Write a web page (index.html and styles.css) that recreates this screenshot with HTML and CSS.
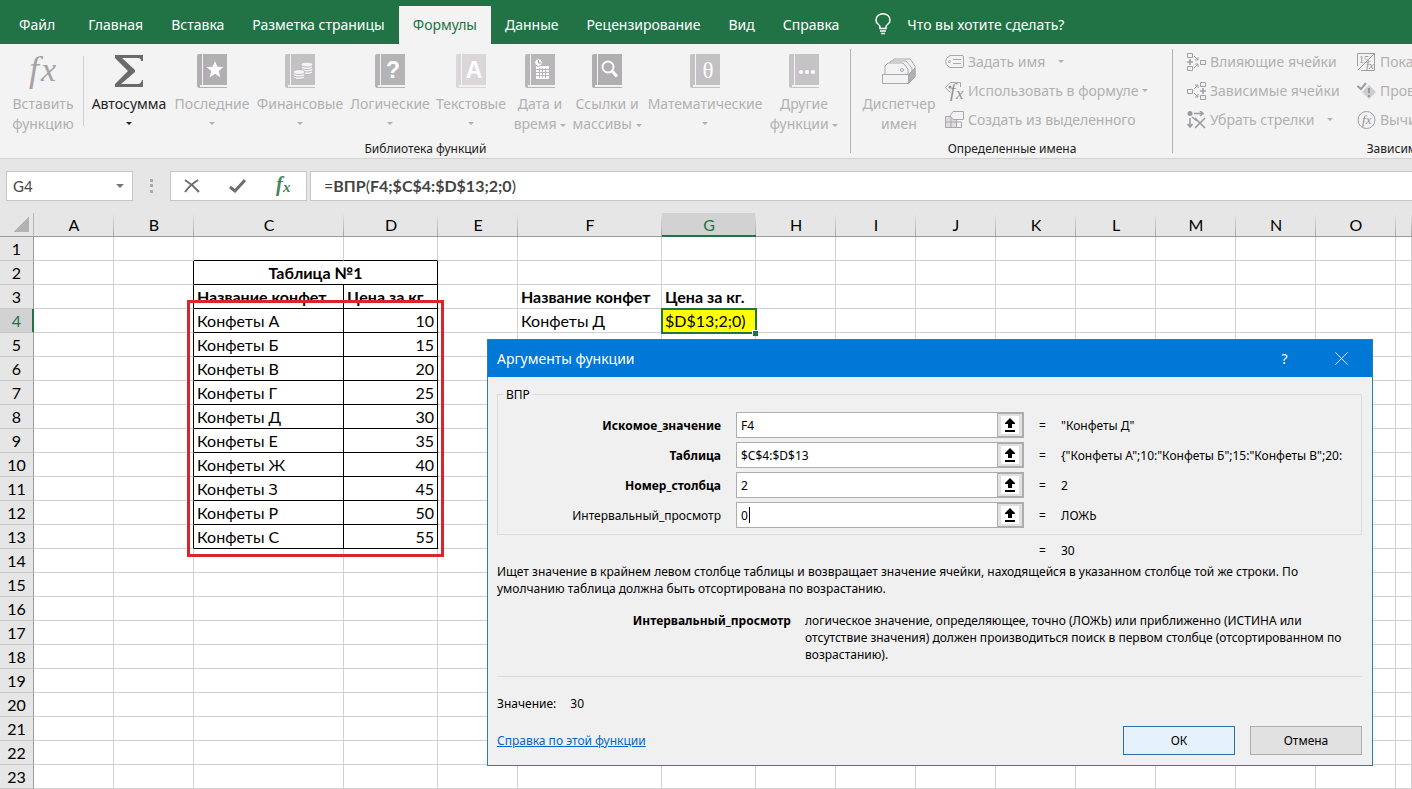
FILE: index.html
```html
<!DOCTYPE html>
<html lang="ru">
<head>
<meta charset="UTF-8">
<meta name="viewport" content="width=device-width, initial-scale=1.0">
<title>Excel - Формулы</title>
<link rel="stylesheet" href="styles.css">
</head>
<body>

<svg class="defs" width="0" height="0">
    <symbol id="book" viewBox="0 0 30 34">
        <path fill="currentColor" d="M2 0h3v31H3v2h27v1H2.500Q0 34 0 31.500V2Q0 0 2 0zM6 0h24v31H6z"/>
    </symbol>
</svg>

<nav class="tabs">
    <button class="tab file">Файл</button>
    <button class="tab">Главная</button>
    <button class="tab">Вставка</button>
    <button class="tab">Разметка страницы</button>
    <button class="tab active">Формулы</button>
    <button class="tab">Данные</button>
    <button class="tab">Рецензирование</button>
    <button class="tab">Вид</button>
    <button class="tab">Справка</button>
    <button class="tell-me">
        <svg width="16" height="22" viewBox="0 0 16 22" fill="none" stroke="#fff" stroke-width="1.500"><path d="M5 15.500V14Q5 12.500 3 11Q1 9.500 1 7a7 6.300 0 0 1 14 0Q15 9.500 13 11Q11 12.500 11 14v1.500zM5 18h6M6 20.500h4"/></svg>
        Что вы хотите сделать?
    </button>
</nav>

<div class="ribbon">
    <section class="group library">
        <div class="big-buttons">
            <button class="big insert">
                <svg class="icon fx" width="30" height="34" fill="#a3a3a3"><text x="1" y="27" font-size="36">f</text><text x="13" y="27" font-size="34">x</text></svg>
                <span>Вставить</span><span>функцию</span>
            </button>
            <button class="big enabled">
                <svg class="icon" width="30" height="34" viewBox="0 0 30 34"><path fill="#6a6a6a" d="M1 1h28v6h-2q0-3-3-3H8l13 12v2L7 30h17q3 0 4-4h1v7H1v-3l13-13L1 4z"/></svg>
                <span>Автосумма</span><i class="arrow below"></i>
            </button>
            <button class="big">
                <svg class="icon" style="color:#b1afb1" width="30" height="34"><use href="#book"/><path fill="#fff" d="M18 7l2.300 5.800 6.200.300-4.800 4 1.600 6.100-5.300-3.500-5.300 3.500 1.600-6.100-4.800-4 6.200-.300z"/></svg>
                <span>Последние</span><i class="arrow below"></i>
            </button>
            <button class="big">
                <svg class="icon" style="color:#c3c1c3" width="30" height="34"><use href="#book"/><g fill="#f5f3f5" stroke="#bbb9bb" stroke-width="1"><ellipse cx="22" cy="18" rx="6" ry="2.500"/><ellipse cx="22" cy="15.500" rx="6" ry="2.500"/><ellipse cx="22" cy="13" rx="6" ry="2.500"/><ellipse cx="22" cy="10.500" rx="6" ry="2.500"/><ellipse cx="14" cy="23" rx="6" ry="2.500"/><ellipse cx="14" cy="20.500" rx="6" ry="2.500"/><ellipse cx="14" cy="18" rx="6" ry="2.500"/></g></svg>
                <span>Финансовые</span><i class="arrow below"></i>
            </button>
            <button class="big">
                <svg class="icon sign" style="color:#b5b3b5" width="30" height="34"><use href="#book"/><text x="18" y="24">?</text></svg>
                <span>Логические</span><i class="arrow below"></i>
            </button>
            <button class="big">
                <svg class="icon sign" style="color:#dad6da" width="30" height="34"><use href="#book"/><text x="18" y="24">A</text></svg>
                <span>Текстовые</span><i class="arrow below"></i>
            </button>
            <button class="big">
                <svg class="icon" style="color:#b8b6b8" width="30" height="34"><use href="#book"/><path fill="#fff" d="M11 12h13v13H11z"/><path stroke="#b8b6b8" d="M11 15.500h13M11 18.500h13M11 21.500h13M14.500 14v10M17.500 14v10M20.500 14v10"/><circle cx="13.500" cy="8.500" r="3.800" fill="#fff" stroke="#b8b6b8"/><path fill="none" stroke="#999" d="M13.500 6v3H16"/></svg>
                <span>Дата и</span><span>время <i class="arrow"></i></span>
            </button>
            <button class="big">
                <svg class="icon" style="color:#b0aeb0" width="30" height="34"><use href="#book"/><g fill="none" stroke="#fff"><circle cx="16" cy="13" r="5.500" stroke-width="1.800"/><path stroke-width="3" d="M20 17l5 5.500"/></g></svg>
                <span>Ссылки и</span><span>массивы <i class="arrow"></i></span>
            </button>
            <button class="big">
                <svg class="icon sign theta" style="color:#c3c1c4" width="30" height="34"><use href="#book"/><text x="18" y="24">θ</text></svg>
                <span>Математические</span><i class="arrow below"></i>
            </button>
            <button class="big">
                <svg class="icon" style="color:#c5c3c6" width="30" height="34"><use href="#book"/><g fill="#fff"><circle cx="12" cy="18" r="2"/><circle cx="18" cy="18" r="2"/><circle cx="24" cy="18" r="2"/></g></svg>
                <span>Другие</span><span>функции <i class="arrow"></i></span>
            </button>
        </div>
        <h2>Библиотека функций</h2>
    </section>

    <section class="group names">
        <div class="row">
            <button class="big">
                <svg class="icon" width="36" height="34" viewBox="0 0 36 34" fill="#f3f3f3" stroke="#aaa7ad"><path d="M11 8l2-3h16l5 7v10H12z"/><path d="M8 10l2-3h15l6 7v10H9z"/><path d="M4 20v-8l3-3h15l5 6v7H4z"/><circle cx="21" cy="16" r="1.500"/><path fill="#b4b1b5" d="M28 20l6-6v9l-6 6z"/><path d="M1.500 20.500h26v9h-26z"/></svg>
                <span>Диспетчер</span><span>имен</span>
            </button>
            <div class="stack">
                <button class="small"><svg width="19" height="18" fill="none" stroke="#aaa6ac"><path d="M5 2.500h12q1.500 0 1.500 1.500v9q0 1.500-1.500 1.500H5Q.500 12 .500 8.500T5 2.500zM8 6.500h8M8 10.500h8"/><circle cx="4.500" cy="8.500" r="1"/></svg>Задать имя<i class="arrow far"></i></button>
                <button class="small"><svg class="fx" width="19" height="18" fill="#929094"><path fill="none" stroke="#aaa6ac" d="M15.500 5V.500H6Q3 2 .500 5.500q2 3 5 5"/><circle cx="5" cy="5" r="1.500"/><text x="5" y="15" font-size="19">f</text><text x="11" y="17" font-size="17">x</text></svg>Использовать в формуле<i class="arrow near"></i></button>
                <button class="small"><svg width="19" height="18" fill="none" stroke="#aaa6ac"><path fill="#dedcde" d="M.500 5.500h11v11H.500z"/><path d="M.500 11h16v5.500H.500M6 5.500v11M11.500 11v5.500"/><path fill="#f3f3f3" d="M8 .500h10.500v8H8L5 5z"/></svg>Создать из выделенного</button>
            </div>
        </div>
        <h2>Определенные имена</h2>
    </section>

    <section class="group audit">
        <div class="row">
            <div class="stack">
                <button class="small"><svg width="19" height="18" fill="none" stroke="#a19fa3"><path d="M.500.500h5v4h-5zM.500 13.500h5v4h-5zM13.500 7.500h5v4h-5z"/><path stroke-width="1.500" d="M0 9h6M3 6v6"/><path d="M7 3l4 4m0-3v3H8M7 15l4-4m0 3v-3H8"/></svg>Влияющие ячейки</button>
                <button class="small"><svg width="19" height="18" fill="none" stroke="#a19fa3"><path d="M13.500.500h5v4h-5zM13.500 13.500h5v4h-5zM.500 7.500h5v4h-5z"/><path stroke-width="1.500" d="M13 9h6M16 6v6"/><path d="M7 7l4-4m0 3V3H8M7 11l4 4m0-3v3H8"/></svg>Зависимые ячейки</button>
                <button class="small"><svg width="19" height="18" fill="none" stroke="#9b999d"><circle cx="3" cy="2.500" r="2.500" fill="#9b999d" stroke="none"/><path stroke-width="1.500" d="M7 2.500h9M13 0l3 2.500L13 5M3 7v9M.500 13L3 16l2.500-3M5 6l5 4"/><path stroke-width="1.500" d="M8 7l10 10M18 7L8 17"/></svg>Убрать стрелки<i class="arrow wide"></i></button>
            </div>
            <div class="stack">
                <button class="small"><svg class="fx" width="19" height="18" fill="#929094"><path fill="none" stroke="#a19fa3" d="M.500 13V.500h17v17H4M18 0L1 17"/><text class="digits" x="2" y="10" font-size="10">15</text><text x="9" y="16" font-size="11">f</text><text x="12" y="16" font-size="11">x</text></svg>Показать формулы</button>
                <button class="small"><svg width="19" height="18" fill="none"><path fill="#cfccd0" d="M12 3l7 7-7 7-7-7z"/><path stroke="#8f8d91" stroke-width="1.600" d="M12 6v5M12 13v2"/><path stroke="#9d9b9f" stroke-width="2" d="M.500 4L4 7l5-6"/></svg>Проверка наличия ошибок</button>
                <button class="small"><svg class="fx" width="19" height="18" fill="#929094"><circle fill="none" stroke="#a19fa3" cx="9.500" cy="9" r="8.500"/><text x="5" y="13" font-size="13">f</text><text x="9" y="13" font-size="12">x</text></svg>Вычислить формулу</button>
            </div>
        </div>
        <h2>Зависимости формул</h2>
    </section>
</div>

<div class="formula-bar">
    <div class="name-box"><input type="text" value="G4" aria-label="Поле имени"><i class="arrow"></i></div>
    <span class="dots"></span>
    <div class="formula-buttons">
        <button aria-label="Отмена"><svg width="16" height="14" fill="none" stroke="#6e6e6e" stroke-width="2"><path d="M1 1q8 5 14 12M14 1Q6 6 1 13"/></svg></button>
        <button aria-label="Ввод"><svg width="17" height="14" fill="none" stroke="#6e6e6e" stroke-width="3"><path d="M1 8l5 4L16 1"/></svg></button>
        <button aria-label="Вставить функцию"><svg class="fx strong" width="18" height="18" fill="#43845c"><text x="2" y="14" font-size="20">f</text><text x="9" y="15" font-size="15">x</text></svg></button>
    </div>
    <div class="formula" contenteditable="true">=<b>ВПР</b>(<b>F4;$C$4:$D$13;2;0</b>)</div>
</div>

<main class="sheet">
    <table class="grid" id="grid"></table>
    <span class="fill-handle"></span>
    <div class="highlight"></div>

    <div class="dialog" role="dialog" aria-labelledby="dialogTitle">
        <header>
            <h1 id="dialogTitle">Аргументы функции</h1>
            <button aria-label="Справка">?</button>
            <button aria-label="Закрыть"><svg width="13" height="13" stroke="#fff"><path d="M.500.500l12 12M12.500.500l-12 12"/></svg></button>
        </header>
        <form class="dialog-body" onsubmit="return false">
            <fieldset>
                <legend>ВПР</legend>
                <div class="arg">
                    <label class="required" for="lookup">Искомое_значение</label>
                    <div class="field"><input type="text" id="lookup" value="F4"><button type="button" aria-label="Свернуть"><svg width="18" height="18"><use href="#pick"/></svg></button></div>
                    <span>=</span><output>"Конфеты Д"</output>
                </div>
                <div class="arg">
                    <label class="required" for="table">Таблица</label>
                    <div class="field"><input type="text" id="table" value="$C$4:$D$13"><button type="button" aria-label="Свернуть"><svg width="18" height="18"><use href="#pick"/></svg></button></div>
                    <span>=</span><output>{"Конфеты А";10:"Конфеты Б";15:"Конфеты В";20:</output>
                </div>
                <div class="arg">
                    <label class="required" for="column">Номер_столбца</label>
                    <div class="field"><input type="text" id="column" value="2"><button type="button" aria-label="Свернуть"><svg width="18" height="18"><use href="#pick"/></svg></button></div>
                    <span>=</span><output>2</output>
                </div>
                <div class="arg">
                    <label for="range">Интервальный_просмотр</label>
                    <div class="field"><input type="text" id="range" value="0"><i class="caret"></i><button type="button" aria-label="Свернуть"><svg width="18" height="18"><use href="#pick"/></svg></button></div>
                    <span>=</span><output>ЛОЖЬ</output>
                </div>
            </fieldset>
            <div class="arg total"><span>=</span><output>30</output></div>
            <p>Ищет значение в крайнем левом столбце таблицы и возвращает значение ячейки, находящейся в указанном столбце той же строки. По умолчанию таблица должна быть отсортирована по возрастанию.</p>
            <dl>
                <dt>Интервальный_просмотр</dt>
                <dd>логическое значение, определяющее, точно (ЛОЖЬ) или приближенно (ИСТИНА или отсутствие значения) должен производиться поиск в первом столбце (отсортированном по возрастанию).</dd>
            </dl>
            <div class="value"><span>Значение:</span><output>30</output></div>
            <footer>
                <a href="#">Справка по этой функции</a>
                <button type="submit" class="ok">ОК</button>
                <button type="button">Отмена</button>
            </footer>
        </form>
    </div>
</main>

<svg class="defs" width="0" height="0">
    <symbol id="pick" viewBox="0 0 18 18"><path fill="#fff" d="M0 0h18v18H0z"/><path d="M9 2l5 5v1h-3v4H7V8H4V7zM4 14h10v2H4z"/></symbol>
</svg>

<script src="sheet.js"></script>
</body>
</html>
```
FILE: styles.css
```css
* {
    box-sizing: border-box;
}

body {
    margin: 0;
    height: 100vh;
    overflow: hidden;
    display: flex;
    flex-direction: column;
    font-family: 'Noto Sans', 'Open Sans', sans-serif;
    font-size: 14px;
    color: #222;
    background-color: #fff;
}
button, input {
    font: inherit;
    color: inherit;
    border: none;
    background: none;
    padding: 0;
    margin: 0;
}
h1, h2, p, dl, dd {
    margin: 0;
    font-weight: normal;
}
svg {
    flex: none;
    display: block;
}
.defs {
    position: absolute;
}
.fx {
    font-family: 'Liberation Serif', serif;
    font-style: italic;
    overflow: visible;
}
.fx.strong {
    font-weight: bold;
}
.fx .digits {
    font-style: normal;
}
.sign text {
    fill: #fff;
    font-family: 'Liberation Sans', sans-serif;
    font-size: 23px;
    font-weight: bold;
    text-anchor: middle;
}
.sign.theta text {
    font-family: 'Liberation Serif', serif;
    font-weight: normal;
}

/* Вкладки */
.tabs {
    display: flex;
    flex: none;
    height: 44px;
    padding-top: 6px;
    background-color: #217346;
    color: #fff;
}
.tab {
    padding: 0 14px 2px;
    white-space: nowrap;
}
.tab.file {
    padding: 0 19px 2px;
}
.tab.active {
    background-color: #f3f3f3;
    color: #217346;
}
.tell-me {
    display: flex;
    align-items: center;
    gap: 16px;
    padding: 0 0 2px 22px;
    white-space: nowrap;
}

/* Лента */
.ribbon {
    display: flex;
    flex: none;
    height: 115px;
    overflow: hidden;
    background-color: #f3f3f3;
    border-bottom: 1px solid #d2d2d2;
    color: #b1b1b1;
}
.group {
    display: flex;
    flex-direction: column;
    flex: none;
    position: relative;
    padding-top: 5px;
}
.group h2 {
    margin-top: auto;
    font-size: 12px;
    line-height: 18px;
    text-align: center;
    color: #222;
}
.library, .names {
    background: linear-gradient(#b5b5b5, #b5b5b5) no-repeat right 5px / 1px 104px;
}
.library {
    width: 851px;
}
.names {
    width: 322px;
}
.audit {
    width: 512px;
}
.big-buttons {
    display: grid;
    grid-template-columns: 86px 86px 80px 96px 84px 78px 60px 74px 122px 76px;
}
.row {
    display: flex;
}
.big {
    display: flex;
    flex-direction: column;
    align-items: center;
    height: 86px;
    padding-top: 5px;
    line-height: 20px;
    white-space: nowrap;
}
.big .icon {
    height: 34px;
    margin-bottom: 6px;
    overflow: visible;
}
.big.enabled {
    color: #222;
}
.insert {
    background: linear-gradient(#d2d2d2, #d2d2d2) no-repeat 83px 7px / 1px 70px;
}
.names .big {
    width: 94px;
    padding-left: 2px;
}
.arrow {
    display: inline-block;
    flex: none;
    border: 3px solid transparent;
    border-top-color: currentColor;
    border-bottom: none;
    vertical-align: middle;
}
.arrow.below {
    margin-top: 8px;
}
.arrow.far {
    margin-left: 9px;
}
.arrow.wide {
    margin-left: 9px;
}
.stack {
    display: flex;
    flex-direction: column;
    margin-top: -2px;
}
.audit .stack {
    width: 170px;
    padding-left: 14px;
}
.small {
    display: flex;
    align-items: center;
    gap: 4px;
    height: 29px;
    white-space: nowrap;
}

/* Строка формул */
.formula-bar {
    display: flex;
    align-items: center;
    flex: none;
    height: 54px;
    padding-left: 6px;
    background-color: #e6e6e6;
    color: #444;
}
.name-box, .formula-buttons, .formula {
    display: flex;
    align-items: center;
    height: 30px;
    background-color: #fff;
    border: 1px solid #c6c6c6;
}
.name-box {
    width: 127px;
    padding: 0 8px 0 6px;
    font-family: Lato, sans-serif;
    font-size: 15px;
}
.name-box input {
    flex: 1;
    min-width: 0;
}
.name-box .arrow {
    border-width: 4px 4px 0;
    color: #777;
}
.dots {
    height: 14px;
    margin: 0 17px;
    border-left: 3px dotted #aaa;
}
.formula-buttons {
    width: 137px;
    padding: 0 14px 0 13px;
    justify-content: space-between;
}
.formula {
    display: block;
    flex: 1;
    margin-left: 3px;
    padding-left: 13px;
    border-right: none;
    font-family: Lato, sans-serif;
    font-size: 16px;
    line-height: 28px;
}

/* Лист */
.sheet {
    position: relative;
    flex: 1;
    min-height: 0;
    overflow: hidden;
}
.grid {
    width: 100%;
    table-layout: fixed;
    border-collapse: separate;
    border-spacing: 0;
    font-family: Lato, sans-serif;
    font-size: 16px;
    color: #000;
}
.grid th, .grid td {
    height: 24px;
    padding: 0 3px;
    line-height: 22px;
    white-space: nowrap;
    overflow: hidden;
}
.grid td {
    border-right: 1px solid #d2d2d2;
    border-bottom: 1px solid #d2d2d2;
}
.grid th {
    padding: 0;
    font-weight: normal;
    text-align: center;
    background-color: #e6e6e6;
}
.grid thead th {
    border-bottom: 1px solid #9b9b9b;
    background-image: linear-gradient(#e6e6e6, #a5a5a5);
    background-repeat: no-repeat;
    background-position: right;
    background-size: 1px 100%;
}
.grid tbody th {
    border-right: 1px solid #9b9b9b;
    border-bottom: 1px solid #c6c6c6;
}
.grid thead th.corner {
    background: linear-gradient(135deg, #e6e6e6 50%, #b3b3b3 50%) no-repeat 14px 4px / 15px 15px;
    background-color: #e6e6e6;
    border-right: 1px solid #b5b5b5;
}
.grid th.current {
    background-color: #d2d2d2;
    color: #217346;
}
.grid thead th.current {
    border-bottom-color: #217346;
    box-shadow: inset 0 -1px #217346;
}
.grid tbody th.current {
    border-right-color: #217346;
    box-shadow: inset -1px 0 #217346;
}
.grid td.line-right {
    border-right-color: #000;
}
.grid td.line-bottom {
    border-bottom-color: #000;
}
.grid td.bold {
    font-weight: bold;
}
.grid td.center {
    text-align: center;
}
.grid td.number {
    text-align: right;
}
.grid td.active {
    background-color: #ff0;
    outline: 2px solid #217346;
    outline-offset: -1px;
}
.fill-handle {
    position: absolute;
    left: 752px;
    top: 117px;
    width: 6px;
    height: 6px;
    background-color: #217346;
    border: 1px solid #fff;
    border-width: 1px 0 0 1px;
}
.highlight {
    position: absolute;
    left: 187px;
    top: 87px;
    width: 257px;
    height: 257px;
    border: 3px solid #d9262c;
}

/* Окно аргументов */
.dialog {
    position: absolute;
    left: 487px;
    top: 126px;
    width: 886px;
    border: 1px solid #2a7fae;
    background-color: #f0f0f0;
    font-size: 12px;
    line-height: 17px;
    color: #000;
}
.dialog header {
    display: flex;
    align-items: center;
    height: 37px;
    padding: 0 2px 0 9px;
    background-color: #0078d7;
    color: #fff;
}
.dialog h1 {
    flex: 1;
    font-size: 14px;
}
.dialog header button {
    display: grid;
    place-items: center;
    width: 57px;
    height: 37px;
    font-size: 14px;
}
.dialog-body {
    padding: 9px 10px 10px 9px;
}
.dialog fieldset {
    margin: 0;
    padding: 9px 0 6px;
    border: 1px solid #dcdcdc;
}
.dialog legend {
    margin-left: 6px;
    padding: 0 2px;
}
.arg {
    display: grid;
    grid-template-columns: 223px 288px 7px 1fr;
    column-gap: 15px;
    align-items: center;
    height: 26px;
    margin-bottom: 4px;
}
.arg:last-child {
    margin-bottom: 0;
}
.arg label {
    text-align: right;
}
.arg output {
    white-space: nowrap;
}
.arg label.required, .dialog dt {
    font-weight: bold;
}
.field {
    display: flex;
    position: relative;
    height: 26px;
    border: 1px solid #adadad;
    background-color: #fff;
}
.field input {
    flex: 1;
    min-width: 0;
    padding-left: 4px;
}
.field button {
    display: grid;
    place-items: center;
    width: 26px;
    border: 1px solid #adadad;
    background-color: #e1e1e1;
}
.caret {
    position: absolute;
    left: 12px;
    top: 4px;
    width: 1px;
    height: 16px;
    background-color: #000;
}
.total {
    grid-template-columns: 7px 1fr;
    padding-left: 542px;
    height: 30px;
    margin-bottom: -2px;
}
.dialog dl {
    display: grid;
    grid-template-columns: 294px 1fr;
    column-gap: 14px;
    margin-top: 15px;
    padding-bottom: 13px;
    border-bottom: 1px solid #dcdcdc;
}
.dialog dt {
    text-align: right;
}
.value {
    display: flex;
    gap: 14px;
    margin-top: 18px;
}
.dialog footer {
    display: flex;
    align-items: center;
    gap: 15px;
    margin-top: 14px;
}
.dialog footer a {
    margin-right: auto;
    color: #0066cc;
}
.dialog footer button {
    width: 112px;
    height: 29px;
    border: 1px solid #adadad;
    background-color: #e1e1e1;
}
.dialog footer .ok {
    border-color: #2a72a5;
    background-color: #e5f1fb;
}
```
FILE: sheet.js
```js
var columns = 'ABCDEFGHIJKLMNOP'.split('');
var widths = { A: 80, B: 80, C: 150, D: 94, E: 80, F: 144, G: 94 };
var sweets = [['А', 10], ['Б', 15], ['В', 20], ['Г', 25], ['Д', 30], ['Е', 35], ['Ж', 40], ['З', 45], ['Р', 50], ['С', 55]];

var cells = {
    C2: ['Таблица №1', 'bold center'],
    C3: ['Название конфет', 'bold'],
    D3: ['Цена за кг.', 'bold'],
    F3: ['Название конфет', 'bold'],
    G3: ['Цена за кг.', 'bold'],
    F4: ['Конфеты Д', ''],
    G4: ['$D$13;2;0)', 'active']
};
sweets.forEach(function(item, i) {
    cells['C' + (i + 4)] = ['Конфеты ' + item[0], ''];
    cells['D' + (i + 4)] = [item[1], 'number'];
});

// Чёрные границы таблицы C2:D13
function lines(col, row) {
    var cls = '';
    if ('BCD'.indexOf(col) >= 0 && row >= 2 && row <= 13) cls += ' line-right';
    if ('CD'.indexOf(col) >= 0 && row >= 1 && row <= 13) cls += ' line-bottom';
    return cls;
}

var html = '<colgroup><col style="width:34px">';
columns.forEach(function(col) {
    html += col === 'P' ? '<col>' : '<col style="width:' + (widths[col] || 80) + 'px">';
});
html += '</colgroup><thead><tr><th class="corner"></th>';
columns.forEach(function(col) {
    html += '<th' + (col === 'G' ? ' class="current"' : '') + '>' + (col === 'P' ? '' : col) + '</th>';
});
html += '</tr></thead><tbody>';

for (var row = 1; row <= 23; row++) {
    html += '<tr><th' + (row === 4 ? ' class="current"' : '') + '>' + row + '</th>';
    columns.forEach(function(col) {
        if (col + row === 'D2') return;
        var cell = cells[col + row] || ['', ''];
        html += '<td' + (col + row === 'C2' ? ' colspan="2"' : '') + ' class="' + cell[1] + lines(col, row) + '">' + cell[0] + '</td>';
    });
    html += '</tr>';
}
document.getElementById('grid').innerHTML = html + '</tbody>';
```
